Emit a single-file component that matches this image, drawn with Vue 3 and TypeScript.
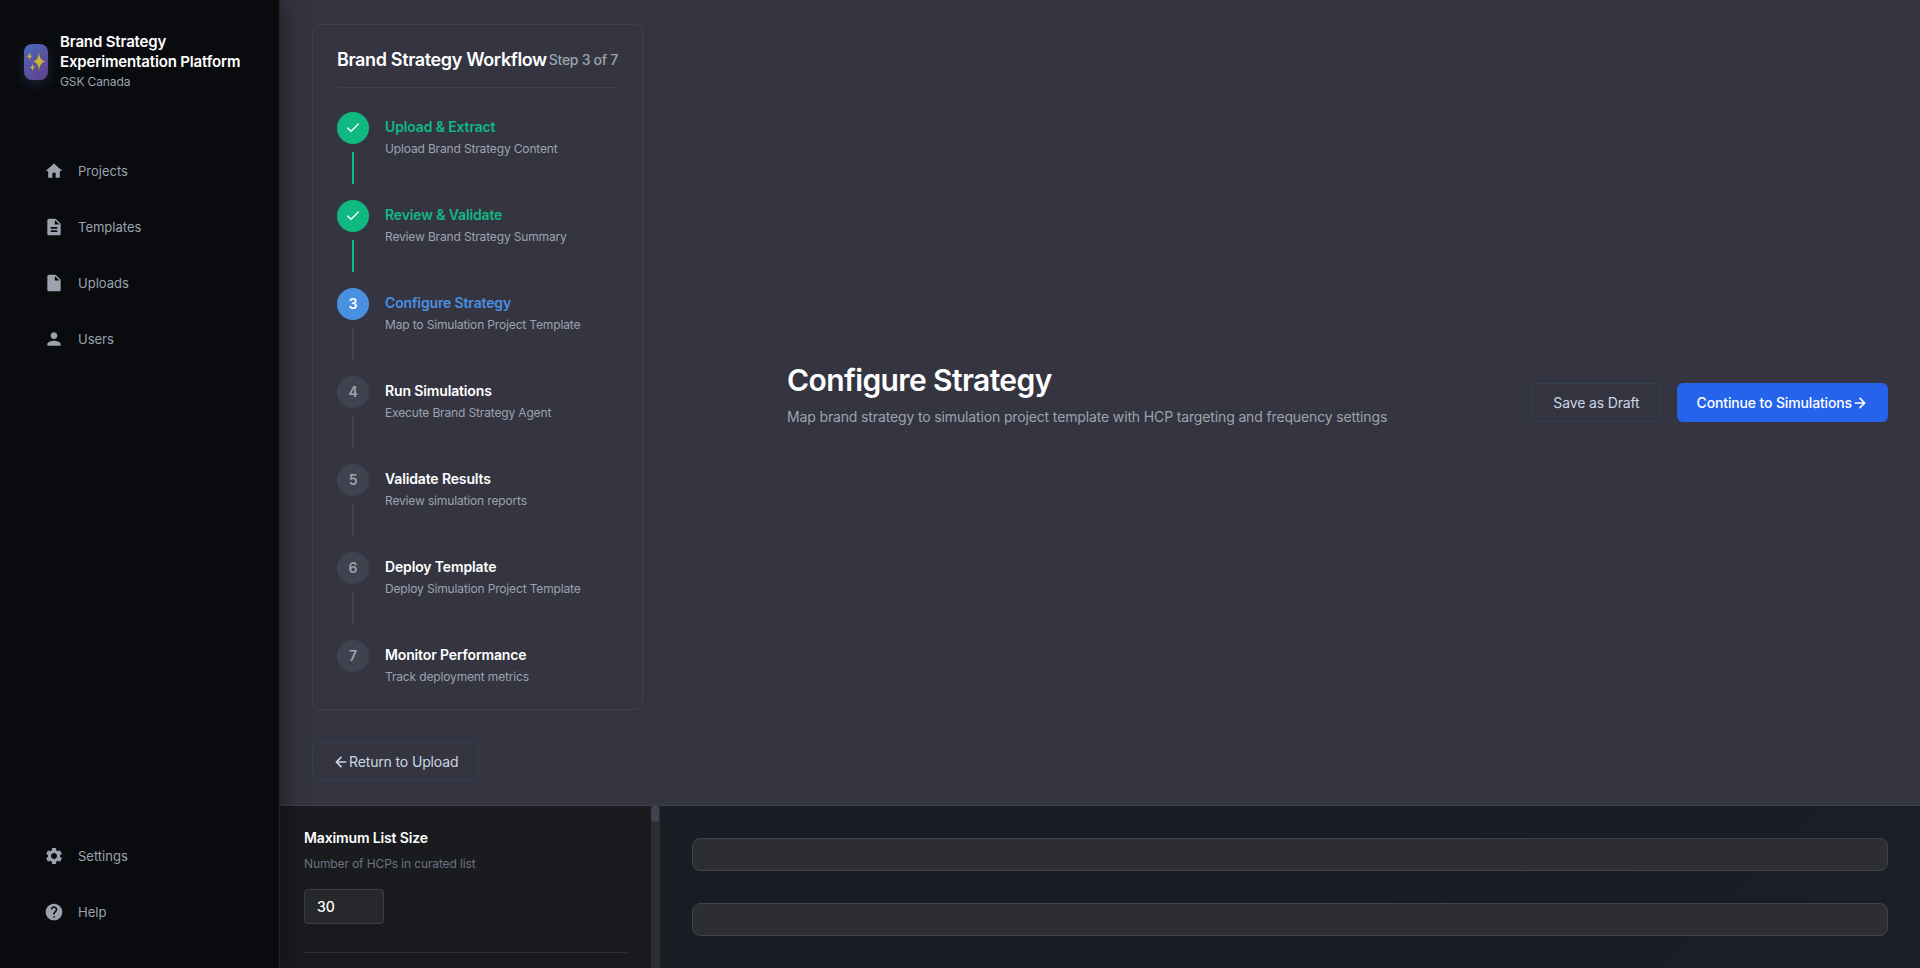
<script setup lang="ts">
interface NavItem {
  label: string
  path: string
}

interface Step {
  title: string
  description: string
}

const mainNav: NavItem[] = [
  { label: 'Projects', path: 'M10 20v-6h4v6h5v-8h3L12 3 2 12h3v8z' },
  {
    label: 'Templates',
    path: 'M14 2H6c-1.1 0-1.99.9-1.99 2L4 20c0 1.1.89 2 1.99 2H18c1.1 0 2-.9 2-2V8l-6-6zm2 16H8v-2h8v2zm0-4H8v-2h8v2zm-3-5V3.5L18.5 9H13z',
  },
  {
    label: 'Uploads',
    path: 'M6 2c-1.1 0-1.99.9-1.99 2L4 20c0 1.1.89 2 1.99 2H18c1.1 0 2-.9 2-2V8l-6-6H6zm7 7V3.5L18.5 9H13z',
  },
  {
    label: 'Users',
    path: 'M12 12c2.21 0 4-1.79 4-4s-1.79-4-4-4-4 1.79-4 4 1.79 4 4 4zm0 2c-2.67 0-8 1.34-8 4v2h16v-2c0-2.66-5.33-4-8-4z',
  },
]

const footerNav: NavItem[] = [
  {
    label: 'Settings',
    path: 'M19.14 12.94c.04-.3.06-.61.06-.94 0-.32-.02-.64-.07-.94l2.03-1.58c.18-.14.23-.41.12-.61l-1.92-3.32c-.12-.22-.37-.29-.59-.22l-2.39.96c-.5-.38-1.03-.7-1.62-.94l-.36-2.54c-.04-.24-.24-.41-.48-.41h-3.84c-.24 0-.43.17-.47.41l-.36 2.54c-.59.24-1.13.57-1.62.94l-2.39-.96c-.22-.08-.47 0-.59.22L2.74 8.87c-.12.21-.08.47.12.61l2.03 1.58c-.05.3-.09.63-.09.94s.02.64.07.94l-2.03 1.58c-.18.14-.23.41-.12.61l1.92 3.32c.12.22.37.29.59.22l2.39-.96c.5.38 1.03.7 1.62.94l.36 2.54c.05.24.24.41.48.41h3.84c.24 0 .44-.17.47-.41l.36-2.54c.59-.24 1.13-.56 1.62-.94l2.39.96c.22.08.47 0 .59-.22l1.92-3.32c.12-.22.07-.47-.12-.61l-2.01-1.58zM12 15.6c-1.98 0-3.6-1.62-3.6-3.6s1.62-3.6 3.6-3.6 3.6 1.62 3.6 3.6-1.62 3.6-3.6 3.6z',
  },
  {
    label: 'Help',
    path: 'M12 2C6.48 2 2 6.48 2 12s4.48 10 10 10 10-4.48 10-10S17.52 2 12 2zm1 17h-2v-2h2v2zm2.07-7.75l-.9.92C13.45 12.9 13 13.5 13 15h-2v-.5c0-1.1.45-2.1 1.17-2.83l1.24-1.26c.37-.36.59-.86.59-1.41 0-1.1-.9-2-2-2s-2 .9-2 2H8c0-2.21 1.79-4 4-4s4 1.79 4 4c0 .88-.36 1.68-.93 2.25z',
  },
]

const steps: Step[] = [
  { title: 'Upload & Extract', description: 'Upload Brand Strategy Content' },
  { title: 'Review & Validate', description: 'Review Brand Strategy Summary' },
  { title: 'Configure Strategy', description: 'Map to Simulation Project Template' },
  { title: 'Run Simulations', description: 'Execute Brand Strategy Agent' },
  { title: 'Validate Results', description: 'Review simulation reports' },
  { title: 'Deploy Template', description: 'Deploy Simulation Project Template' },
  { title: 'Monitor Performance', description: 'Track deployment metrics' },
]

const current = 3

function stateOf(index: number): string {
  const n = index + 1
  return n < current ? 'done' : n === current ? 'active' : 'pending'
}
</script>

<template>
  <div class="app">
    <aside class="sidebar">
      <div class="brand">
        <div class="logo">
          <svg width="24" height="36" viewBox="0 0 24 36">
            <path d="M15 8.2Q15.5 16.8 21.8 17.5Q15.5 18.2 15 26.8Q14.5 18.2 8.6 17.5Q14.5 16.8 15 8.2Z" />
            <path d="M5.5 8Q5.8 11.9 8.4 12.3Q5.8 12.7 5.5 16.6Q5.2 12.7 2.7 12.3Q5.2 11.9 5.5 8Z" />
            <path d="M8.5 20Q8.8 23 10.9 23.4Q8.8 23.8 8.5 26.8Q8.2 23.8 6.2 23.4Q8.2 23 8.5 20Z" />
          </svg>
        </div>
        <div class="brand-text">
          <div class="brand-name">Brand Strategy<br />Experimentation Platform</div>
          <div class="brand-org">GSK Canada</div>
        </div>
      </div>
      <nav class="nav">
        <a v-for="item in mainNav" :key="item.label" class="nav-item">
          <svg viewBox="0 0 24 24"><path :d="item.path" /></svg>
          <span>{{ item.label }}</span>
        </a>
      </nav>
      <nav class="nav nav-footer">
        <a v-for="item in footerNav" :key="item.label" class="nav-item">
          <svg viewBox="0 0 24 24"><path :d="item.path" /></svg>
          <span>{{ item.label }}</span>
        </a>
      </nav>
    </aside>

    <main class="content">
      <header class="header">
        <div class="left">
          <section class="workflow">
            <div class="workflow-head">
              <h3>Brand Strategy Workflow</h3>
              <span>Step 3 of 7</span>
            </div>
            <div v-for="(step, i) in steps" :key="step.title" class="step" :class="stateOf(i)">
              <div class="rail">
                <div class="dot">
                  <svg v-if="stateOf(i) === 'done'" class="icon" viewBox="0 0 24 24">
                    <path d="M20 6 9 17l-5-5" />
                  </svg>
                  <span v-else>{{ i + 1 }}</span>
                </div>
                <div v-if="i < steps.length - 1" class="line"></div>
              </div>
              <div class="step-text">
                <div class="step-title">{{ step.title }}</div>
                <div class="step-desc">{{ step.description }}</div>
              </div>
            </div>
          </section>
          <button class="btn outline">
            <svg class="icon" viewBox="0 0 24 24"><path d="M19 12H5M12 19l-7-7 7-7" /></svg>
            <span>Return to Upload</span>
          </button>
        </div>
        <div class="heading">
          <h1>Configure Strategy</h1>
          <p>Map brand strategy to simulation project template with HCP targeting and frequency settings</p>
        </div>
        <div class="actions">
          <button class="btn outline">Save as Draft</button>
          <button class="btn primary">
            <span>Continue to Simulations</span>
            <svg class="icon" viewBox="0 0 24 24"><path d="M5 12h14M12 5l7 7-7 7" /></svg>
          </button>
        </div>
      </header>

      <div class="workspace">
        <section class="settings">
          <div class="settings-body">
            <div class="field">
              <div class="field-title">Maximum List Size</div>
              <div class="field-desc">Number of HCPs in curated list</div>
              <div class="field-input">30</div>
            </div>
          </div>
          <div class="track"><div class="thumb"></div></div>
        </section>
        <section class="results">
          <div class="panel"></div>
          <div class="panel"></div>
        </section>
      </div>
    </main>
  </div>
</template>

<style>
body {
  margin: 0;
  background: #1a1b1e;
  overflow: hidden;
}
</style>

<style scoped>
.app {
  display: flex;
  width: 100%;
  height: 100vh;
  overflow: hidden;
  font-family: Inter, "Liberation Sans", sans-serif;
  color: #fff;
}
.app * {
  box-sizing: border-box;
  letter-spacing: -0.01em;
}
h1,
h3,
p {
  margin: 0;
}
.sidebar {
  position: relative;
  z-index: 1;
  flex: 0 0 280px;
  display: flex;
  flex-direction: column;
  padding: 32px 24px;
  background: #0a0b0e;
  border-right: 1px solid #222327;
  box-shadow: 4px 0 24px rgba(0, 0, 0, 0.4);
}
.brand {
  display: flex;
  align-items: center;
  gap: 12px;
  height: 60px;
}
.logo {
  width: 24px;
  height: 36px;
  border-radius: 8px;
  background: linear-gradient(135deg, #4c69bd, #623f87);
  box-shadow: 0 4px 12px rgba(76, 105, 189, 0.25);
}
.logo svg {
  display: block;
  fill: #cfb236;
}
.brand-name {
  font-size: 15px;
  font-weight: 600;
  line-height: 20px;
  white-space: nowrap;
}
.brand-org {
  font-size: 12px;
  line-height: 20px;
  color: #9ca3af;
}
.nav {
  display: flex;
  flex-direction: column;
  gap: 8px;
  margin-top: 55px;
}
.nav-footer {
  margin-top: auto;
}
.nav-item {
  display: flex;
  align-items: center;
  gap: 14px;
  height: 48px;
  padding: 0 20px;
  font-size: 13px;
  color: #9ca3af;
}
.nav-item span {
  letter-spacing: 0;
}
.nav-item svg {
  width: 20px;
  height: 20px;
  fill: #9ca3af;
}
.content {
  flex: 1;
  min-width: 0;
  display: flex;
  flex-direction: column;
}
.header {
  flex: 0 0 806px;
  display: flex;
  align-items: center;
  padding: 0 32px;
  background: #343541;
  border-bottom: 1px solid #40414f;
}
.left {
  display: flex;
  flex-direction: column;
  align-items: flex-start;
  gap: 32px;
}
.workflow {
  width: 331px;
  height: 686px;
  padding: 24px;
  border: 1px solid #40414f;
  border-radius: 8px;
}
.workflow-head {
  display: flex;
  align-items: flex-start;
  justify-content: space-between;
  height: 39px;
  margin-bottom: 24px;
  border-bottom: 1px solid #40414f;
  white-space: nowrap;
}
.workflow-head h3 {
  font-size: 18px;
  font-weight: 600;
  letter-spacing: -0.02em;
  line-height: 21px;
}
.workflow-head span {
  font-size: 14px;
  font-weight: 500;
  letter-spacing: -0.02em;
  line-height: 21px;
  color: #9ca3af;
}
.step {
  display: flex;
  gap: 16px;
  height: 88px;
}
.rail {
  display: flex;
  flex-direction: column;
  align-items: center;
  gap: 8px;
}
.dot {
  display: flex;
  align-items: center;
  justify-content: center;
  width: 32px;
  height: 32px;
  border-radius: 50%;
  background: #40434f;
  color: #9ca3af;
  font-size: 14px;
  font-weight: 600;
}
.dot span {
  line-height: 22px;
  padding-bottom: 1px;
}
.line {
  width: 2px;
  height: 32px;
  background: #40434f;
}
.done .dot,
.active .dot {
  color: #fff;
}
.done .dot,
.done .line {
  background: #10b981;
}
.active .dot {
  background: #4a90e2;
}
.icon {
  width: 16px;
  height: 16px;
  fill: none;
  stroke: currentColor;
  stroke-width: 2;
  stroke-linecap: round;
  stroke-linejoin: round;
}
.step-text {
  padding-top: 4px;
}
.step-title {
  font-size: 14px;
  font-weight: 600;
  line-height: 22px;
}
.done .step-title {
  color: #10b981;
}
.active .step-title {
  color: #4a90e2;
}
.step-desc {
  margin-top: 2px;
  font-size: 12px;
  letter-spacing: -0.15px;
  line-height: 17px;
  color: #9ca3af;
}
.btn {
  display: flex;
  align-items: center;
  height: 39px;
  padding: 0 20px;
  border: 0;
  border-radius: 6px;
  font-family: inherit;
  font-size: 14px;
  font-weight: 500;
  white-space: nowrap;
}
.outline {
  border: 1px solid #334155;
  background: transparent;
  color: #cbd5e1;
  font-weight: 400;
}
.primary {
  background: #2563eb;
  color: #fff;
}
.btn .icon {
  stroke-width: 2.5;
}
.heading {
  flex: 1;
  margin-left: 144px;
  padding-bottom: 15px;
}
.heading h1 {
  margin-bottom: 8px;
  font-size: 30px;
  font-weight: 600;
  letter-spacing: -0.02em;
  line-height: 36px;
}
.heading p {
  font-size: 14px;
  line-height: 22px;
  color: #9ca3af;
}
.actions {
  display: flex;
  gap: 16px;
}
.workspace {
  flex: 1;
  display: flex;
  min-height: 0;
}
.settings {
  flex: 0 0 380px;
  display: flex;
  background: #1a1b1e;
  border-right: 1px solid #2f3033;
}
.settings-body {
  flex: 1;
  padding: 20px 24px 0;
}
.field {
  height: 127px;
  border-bottom: 1px solid #2f3033;
}
.field-title {
  font-size: 14px;
  font-weight: 600;
  line-height: 24px;
}
.field-desc {
  margin-top: 4px;
  font-size: 12px;
  line-height: 20px;
  color: #6b7280;
}
.field-input {
  width: 80px;
  height: 35px;
  margin-top: 15px;
  padding: 0 12px;
  border: 1px solid #3e3f43;
  border-radius: 4px;
  background: #27282b;
  font-size: 14px;
  font-weight: 500;
  line-height: 34px;
}
.track {
  width: 8px;
  background: #2d2e32;
}
.thumb {
  height: 16px;
  border-radius: 4px;
  background: #40434f;
}
.results {
  flex: 1;
  display: flex;
  flex-direction: column;
  gap: 32px;
  padding: 32px;
  background: linear-gradient(135deg, #1a1c24, #1b1e27);
}
.panel {
  flex: 0 0 33px;
  border: 1px solid #40434f;
  border-radius: 8px;
  background: #2d2e32;
}
</style>
